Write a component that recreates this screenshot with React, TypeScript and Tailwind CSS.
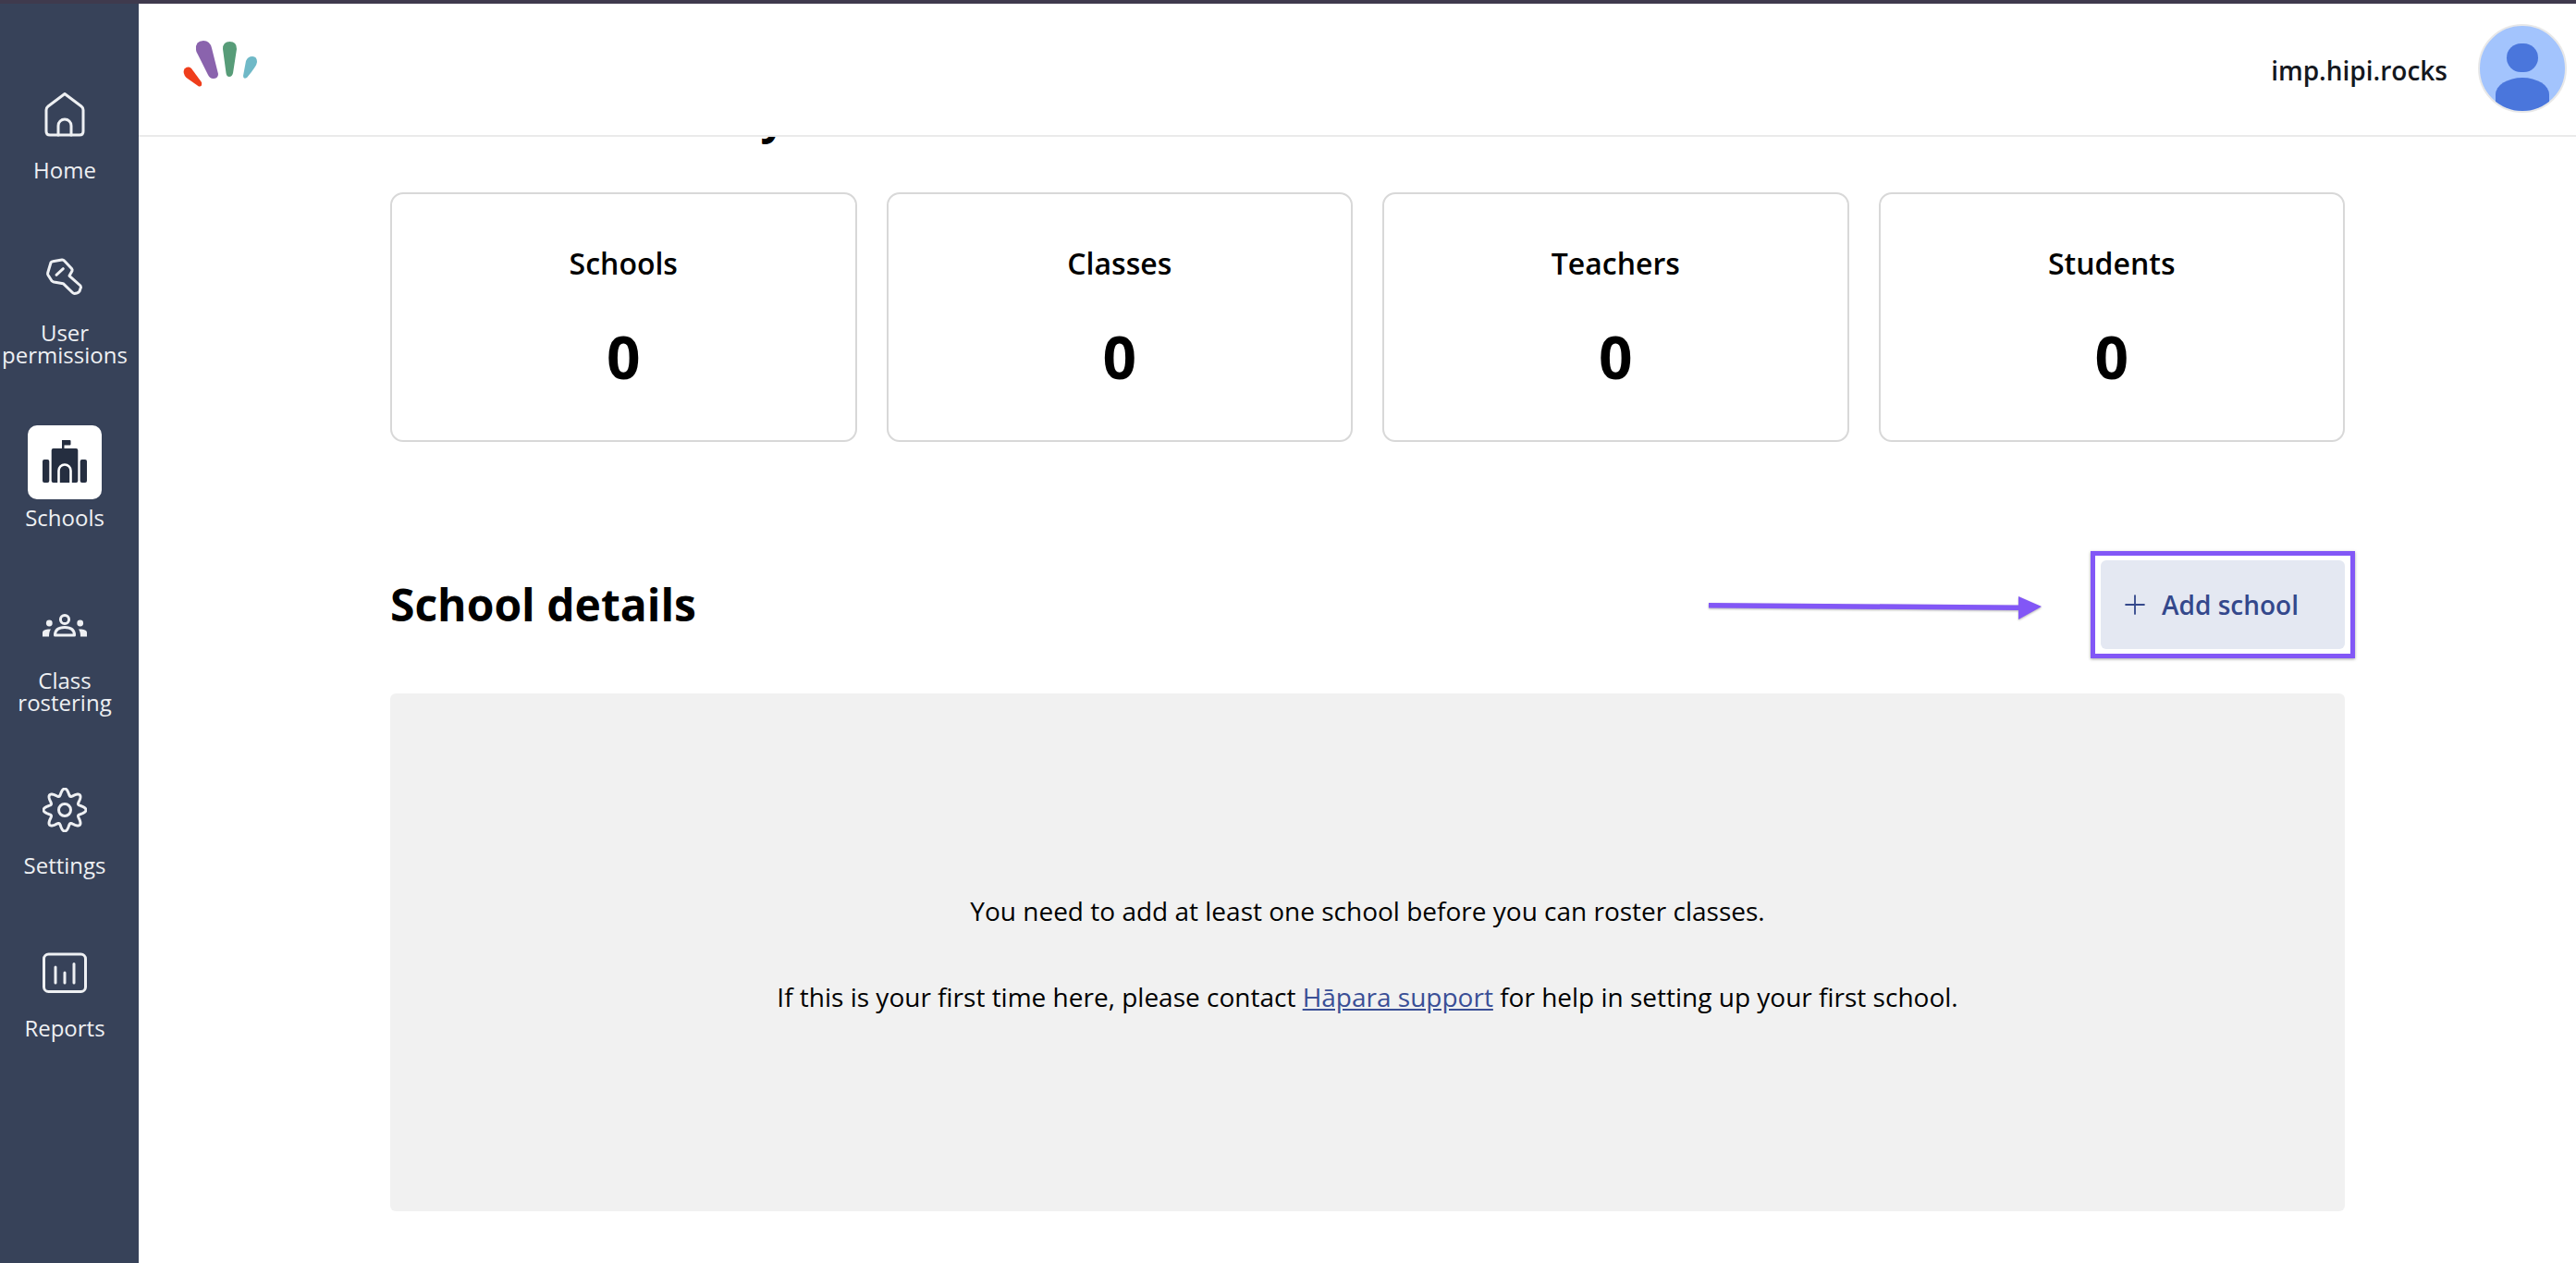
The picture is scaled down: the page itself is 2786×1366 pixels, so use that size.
import React from 'react';
import { Plus } from 'lucide-react';

const HomeIcon = () => (
  <svg viewBox="0 0 48 48" className="w-12 h-12" fill="none" stroke="currentColor" strokeWidth="3" strokeLinejoin="round" strokeLinecap="round">
    <path d="M24 1.5 L42 15 Q44 16.5 44 19 V42 Q44 46 40 46 H8 Q4 46 4 42 V19 Q4 16.5 6 15 Z" />
    <path d="M17 46 V36 a7 7 0 0 1 14 0 V46" />
  </svg>
);

const KeyIcon = () => (
  <svg viewBox="0 0 48 48" className="w-12 h-12" fill="none" stroke="currentColor" strokeWidth="3" strokeLinejoin="round" strokeLinecap="round">
    <path d="M5.7 19 L9 8 Q9.5 7 11 6.8 L21 5 Q22.5 4.8 23.5 6 L31.5 14.5 Q32.5 15.7 32 17 L29 22.3 L41 33 Q42 34.5 41 36 L40 39 Q39 40.5 37 41 L34.5 41.5 Q33.5 41.5 32.5 40.5 L22.3 30.7 L12.3 29 Q11 28.7 10 27.7 L6 21.5 Q5.3 20.3 5.7 19 Z" />
    <path d="M15 21.3 L22.3 14.7" />
  </svg>
);

const SchoolIcon = () => (
  <svg viewBox="0 0 48 48" className="w-12 h-12" fill="#252e40">
    <rect x="21" y="0" width="2.5" height="11" />
    <rect x="21" y="0" width="9.5" height="5.5" rx="1" />
    <rect x="9.7" y="9" width="28.6" height="37" rx="2" />
    <rect x="0" y="21" width="7.3" height="25" rx="2" />
    <rect x="40.7" y="21" width="7.3" height="25" rx="2" />
    <path d="M17.5 46 V33 a6.5 6.5 0 0 1 13 0 V46" fill="none" stroke="#ffffff" strokeWidth="2.6" />
  </svg>
);

const ClassIcon = () => (
  <svg viewBox="0 0 48 48" className="w-12 h-12" fill="none" stroke="currentColor">
    <circle cx="24" cy="18" r="4.6" strokeWidth="3" />
    <path d="M13.5 35 Q13.5 26.5 24 26.5 Q34.5 26.5 34.5 35 Z" strokeWidth="3" strokeLinejoin="round" />
    <circle cx="7.3" cy="22" r="3.4" fill="currentColor" stroke="none" />
    <circle cx="40.7" cy="22" r="3.4" fill="currentColor" stroke="none" />
    <path d="M0 36.5 V32 Q0 29 6 28.5 H9 Q7 31 7 36.5 Z" fill="currentColor" stroke="none" />
    <path d="M48 36.5 V32 Q48 29 42 28.5 H39 Q41 31 41 36.5 Z" fill="currentColor" stroke="none" />
  </svg>
);

// wavy 8 lobe gear outline
const gearPath = (() => {
  const pts: string[] = [];
  for (let i = 0; i < 240; i++) {
    const t = (i / 240) * Math.PI * 2;
    const r = 19.4 + 3.6 * Math.cos(8 * t);
    pts.push(`${(24 + r * Math.sin(t)).toFixed(2)} ${(24 - r * Math.cos(t)).toFixed(2)}`);
  }
  return `M${pts.join(' L')} Z`;
})();

const SettingsIcon = () => (
  <svg viewBox="0 0 48 48" className="w-12 h-12" fill="none" stroke="currentColor" strokeWidth="3" strokeLinejoin="round">
    <path d={gearPath} />
    <circle cx="24" cy="24" r="6.5" />
  </svg>
);

const ReportsIcon = () => (
  <svg viewBox="0 0 48 48" className="w-12 h-12" fill="none" stroke="currentColor" strokeWidth="3" strokeLinecap="round">
    <rect x="1.5" y="4" width="45" height="40.5" rx="5" />
    <path d="M14 18 V35 M24 24 V35 M34 14.5 V35" />
  </svg>
);

const navItems = [
  { label: ['Home'], icon: <HomeIcon /> },
  { label: ['User', 'permissions'], icon: <KeyIcon /> },
  { label: ['Schools'], icon: <SchoolIcon />, active: true },
  { label: ['Class', 'rostering'], icon: <ClassIcon /> },
  { label: ['Settings'], icon: <SettingsIcon /> },
  { label: ['Reports'], icon: <ReportsIcon /> },
];

const stats = ['Schools', 'Classes', 'Teachers', 'Students'];

const Logo = () => (
  <svg width="90" height="60" viewBox="0 0 90 60">
    <path d="M2.5 30.5 Q6 27 10 30 L21 45 Q22 50 18 49.5 L4.5 40 Q0 35 2.5 30.5 Z" fill="#ef3e1c" />
    <path d="M15 10 Q14 0 23 0 Q30 0 32 8 L39 36 Q39 41 33.5 41 Q30 41 28 37 L17 15 Q15 12 15 10 Z" fill="#8a63ad" />
    <path d="M44 9 Q44 1 51.5 1 Q59 1 59 9 L55 35 Q54 39 51 39 Q48 39 47.5 35 Z" fill="#579c78" />
    <path d="M69 22 Q71 17 76 17 Q81 17 81 23 Q81 27 70 40 Q66 42 66 38 Z" fill="#6fb9c7" />
  </svg>
);

const Avatar = () => (
  <div className="w-[96px] h-[96px] rounded-full border-2 border-[#e8e8e8] bg-[#a3c4fd] overflow-hidden flex flex-col items-center shrink-0">
    <div className="w-[34px] h-[34px] rounded-full bg-[#4a76dc] mt-[19px]" />
    <div className="w-[58px] h-[40px] rounded-t-[50%] bg-[#4a76dc] mt-[6px]" />
  </div>
);

export default function App() {
  return (
    <div className="w-[2786px] h-screen flex flex-col overflow-hidden bg-white font-['Open_Sans',sans-serif]">
      <div className="h-1 bg-[#3f3a4d] shrink-0" />
      <div className="flex flex-1 min-h-0">
        {/* Sidebar */}
        <nav className="w-[150px] shrink-0 bg-[#374259] text-[#eef0f3] flex flex-col items-center pt-[80px] pr-[10px] gap-16">
          {navItems.map((item) => (
            <div key={item.label[0]} className="flex flex-col items-center gap-2">
              <div className={`w-20 h-20 rounded-[10px] flex items-center justify-center ${item.active ? 'bg-white' : ''}`}>
                {item.icon}
              </div>
              <div className="text-[24px] leading-6 text-center">
                {item.label.map((line) => (
                  <div key={line}>{line}</div>
                ))}
              </div>
            </div>
          ))}
        </nav>

        <div className="flex-1 min-w-0 flex flex-col">
          {/* Header */}
          <header className="h-[144px] shrink-0 border-b-2 border-[#eaeaea] flex items-center justify-between pl-[47px] pr-[10px]">
            <div className="-mt-[2px]">
              <Logo />
            </div>
            <div className="flex items-center gap-[33px] -mt-[2px]">
              <span className="text-[28px] font-semibold text-[#15181e] mt-[3px]">imp.hipi.rocks</span>
              <Avatar />
            </div>
          </header>

          {/* Main */}
          <main className="flex-1 min-h-0 overflow-hidden pl-[272px]">
            <div className="w-[2114px]">
              <h2 className="text-[48px] leading-[64px] font-bold text-black -mt-[54px]">Domain summary</h2>

              <div className="grid grid-cols-4 gap-[32px] mt-[50px]">
                {stats.map((name) => (
                  <div key={name} className="h-[270px] rounded-[14px] border-2 border-[#d8d8d8] flex flex-col items-center pt-[53px]">
                    <div className="text-[32px] leading-[44px] font-semibold text-black">{name}</div>
                    <div className="text-[64px] leading-[88px] font-bold text-black mt-[35px]">0</div>
                  </div>
                ))}
              </div>

              <div className="flex items-center justify-between mt-[128px]">
                <h2 className="text-[48px] leading-[64px] font-bold text-black">School details</h2>
                <div className="relative">
                  <button className="w-[264px] h-[96px] rounded-[6px] bg-[#e4e8f2] text-[#34488c] text-[28px] font-semibold flex items-center pl-[20px] gap-[12px]">
                    <Plus size={34} strokeWidth={1.3} />
                    Add school
                  </button>
                  {/* annotation drawn over the screenshot */}
                  <span className="absolute -left-[11px] -right-[11px] -top-[10px] -bottom-[10px] border-[5px] border-[#8257f6] shadow-[0_1px_3px_rgba(0,0,0,0.35)] pointer-events-none" />
                  <svg className="absolute -left-[426px] top-[36px] drop-shadow-[0_1px_1px_rgba(0,0,0,0.3)]" width="364" height="30" viewBox="0 0 364 30">
                    <path d="M2 10 L337 12.500 L337 3 L362 14 L337 28 L337 18 L2 15.500 Z" fill="#8257f6" />
                  </svg>
                </div>
              </div>

              <div className="mt-[48px] h-[560px] rounded-[6px] bg-[#f1f1f1] flex flex-col items-center justify-center gap-[53px] pt-[3px] text-[28px] leading-[40px] text-black">
                <p>You need to add at least one school before you can roster classes.</p>
                <p>
                  If this is your first time here, please contact{' '}
                  <a className="text-[#3a4f96] underline">Hāpara support</a> for help in setting up your first school.
                </p>
              </div>
            </div>
          </main>
        </div>
      </div>
    </div>
  );
}
